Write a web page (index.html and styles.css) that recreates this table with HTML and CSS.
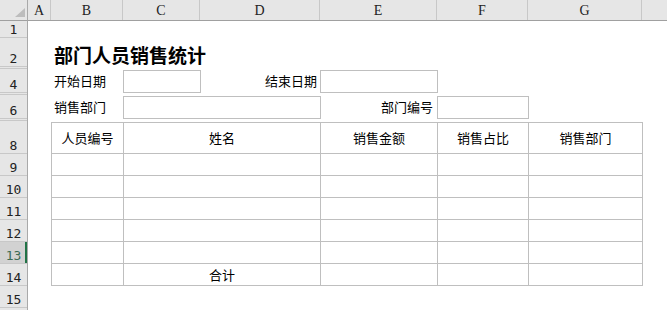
FILE: index.html
```html
<!DOCTYPE html>
<html lang="zh-CN">
<head>
<meta charset="utf-8">
<title>部门人员销售统计</title>
<link rel="stylesheet" href="styles.css">
</head>
<body>
<div class="sheet">
  <div class="corner"><span class="corner-mark"></span></div>

  <div class="colbar">
    <div class="colhd col-a">A</div>
    <div class="colhd col-b">B</div>
    <div class="colhd col-c">C</div>
    <div class="colhd col-d">D</div>
    <div class="colhd col-e">E</div>
    <div class="colhd col-f">F</div>
    <div class="colhd col-g">G</div>
    <div class="colhd col-h"></div>
  </div>

  <div class="rowbar">
    <div class="rowhd row-s">1</div>
    <div class="rowhd row-title">2</div>
    <div class="rowhd row-gap"></div>
    <div class="rowhd row-n after-gap">4</div>
    <div class="rowhd row-gap"></div>
    <div class="rowhd row-n after-gap">6</div>
    <div class="rowhd row-gap"></div>
    <div class="rowhd row-head after-gap">8</div>
    <div class="rowhd row-n">9</div>
    <div class="rowhd row-n">10</div>
    <div class="rowhd row-n">11</div>
    <div class="rowhd row-n">12</div>
    <div class="rowhd row-n is-active">13</div>
    <div class="rowhd row-n">14</div>
    <div class="rowhd row-n">15</div>
    <div class="rowhd row-rest"></div>
  </div>

  <div class="cells">
    <div class="title">部门人员销售统计</div>

    <div class="label label-start">开始日期</div>
    <div class="field field-start"></div>
    <div class="label label-end">结束日期</div>
    <div class="field field-end"></div>

    <div class="label label-dept">销售部门</div>
    <div class="field field-dept"></div>
    <div class="label label-code">部门编号</div>
    <div class="field field-code"></div>

    <div class="report">
      <div class="th">人员编号</div>
      <div class="th">姓名</div>
      <div class="th">销售金额</div>
      <div class="th">销售占比</div>
      <div class="th">销售部门</div>

      <div class="td"></div><div class="td"></div><div class="td"></div><div class="td"></div><div class="td"></div>
      <div class="td"></div><div class="td"></div><div class="td"></div><div class="td"></div><div class="td"></div>
      <div class="td"></div><div class="td"></div><div class="td"></div><div class="td"></div><div class="td"></div>
      <div class="td"></div><div class="td"></div><div class="td"></div><div class="td"></div><div class="td"></div>
      <div class="td"></div><div class="td"></div><div class="td"></div><div class="td"></div><div class="td"></div>
      <div class="td"></div><div class="td td-total">合计</div><div class="td"></div><div class="td"></div><div class="td"></div>
    </div>
  </div>
</div>
</body>
</html>
```

FILE: styles.css
```css
* {
  box-sizing: border-box;
}

html,
body {
  margin: 0;
  padding: 0;
  background: #ffffff;
}

body {
  width: 667px;
  height: 310px;
  overflow: hidden;
  font-family: "Noto Sans CJK SC", "Noto Sans", sans-serif;
  color: #000000;
}

/* whole worksheet: headers on top and left, cells in the rest */
.sheet {
  display: grid;
  grid-template-columns: 28px 1fr;
  grid-template-rows: 21px 1fr;
  width: 667px;
  height: 310px;
  overflow: hidden;
}

.corner {
  position: relative;
  background: #e6e6e6;
  border-right: 1px solid #a9a9a9;
  border-bottom: 1px solid #a0a0a0;
}

.corner-mark {
  position: absolute;
  left: 15px;
  top: 8px;
  width: 10px;
  height: 9px;
  background: #bdbdbd;
  clip-path: polygon(100% 0, 100% 100%, 0 100%);
}

/* column letters */
.colbar {
  display: flex;
  background: #e6e6e6;
  border-bottom: 1px solid #a0a0a0;
}

.colhd {
  display: flex;
  align-items: flex-end;
  justify-content: center;
  flex: none;
  padding-bottom: 2px;
  border-right: 1px solid #c8c8c8;
  font-family: "Liberation Serif", "DejaVu Serif", serif;
  font-size: 14px;
  line-height: 14px;
  color: #222222;
}

.col-a { width: 23px; }
.col-b { width: 72px; }
.col-c { width: 77px; }
.col-d { width: 120px; }
.col-e { width: 117px; }
.col-f { width: 91px; }
.col-g { width: 114px; }
.col-h { flex: 1; border-right: none; }

/* row numbers */
.rowbar {
  display: flex;
  flex-direction: column;
  min-height: 0;
  overflow: hidden;
  background: #e6e6e6;
  border-right: 1px solid #a9a9a9;
}

.rowhd {
  display: flex;
  align-items: flex-end;
  justify-content: center;
  flex: none;
  border-top: 1px solid #c8c8c8;
  font-family: "DejaVu Sans Mono", "Liberation Mono", monospace;
  font-size: 13px;
  line-height: 13px;
  padding-bottom: 1px;
  color: #222222;
}

.rowhd:first-child {
  border-top: none;
}

.row-s { height: 16px; }
.row-title { height: 29px; }
.row-n { height: 22px; }
.row-head { height: 31px; }
.row-rest { flex: 1 1 auto; min-height: 0; }

.row-gap {
  height: 4px;
  background: linear-gradient(to bottom, #e6e6e6 1px, #c8c8c8 1px, #c8c8c8 2px, #e6e6e6 2px);
}

.after-gap {
  border-top: none;
}

.rowhd.is-active {
  background: #d2d2d2;
  color: #3d6b54;
  box-shadow: inset -2px 0 0 #217346;
}

/* cell area, one track per sheet column / row */
.cells {
  display: grid;
  grid-template-columns: 23px 72px 77px 120px 117px 91px 114px 1fr;
  grid-template-rows: 16px 29px 4px 22px 4px 22px 4px 31px repeat(7, 22px);
  min-height: 0;
}

.title {
  grid-column: 2 / 6;
  grid-row: 2;
  align-self: end;
  padding-left: 3px;
  font-size: 19px;
  font-weight: bold;
  line-height: 22px;
  white-space: nowrap;
}

.label {
  display: flex;
  align-items: center;
  font-size: 13px;
  line-height: 16px;
  white-space: nowrap;
}

.label-start { grid-column: 2; grid-row: 4; padding-left: 3px; }
.label-end { grid-column: 4; grid-row: 4; justify-content: flex-end; padding-right: 3px; }
.label-dept { grid-column: 2; grid-row: 6; padding-left: 3px; }
.label-code { grid-column: 5; grid-row: 6; justify-content: flex-end; padding-right: 4px; }

.field {
  margin: 0 -1px -1px 0;
  border: 1px solid #bfbfbf;
}

.field-start { grid-column: 3; grid-row: 4; }
.field-end { grid-column: 5; grid-row: 4; }
.field-dept { grid-column: 3 / 5; grid-row: 6; }
.field-code { grid-column: 6; grid-row: 6; }

/* bordered report block B8:G14 */
.report {
  grid-column: 2 / 8;
  grid-row: 8 / 15;
  display: grid;
  grid-template-columns: 72px 197px 117px 91px 114px;
  grid-template-rows: 31px repeat(6, 22px);
  margin: 0 -1px -1px 0;
  border-right: 1px solid #bfbfbf;
  border-bottom: 1px solid #bfbfbf;
}

.th,
.td {
  display: flex;
  align-items: center;
  justify-content: center;
  border-left: 1px solid #bfbfbf;
  border-top: 1px solid #bfbfbf;
  font-size: 13px;
  line-height: 16px;
  white-space: nowrap;
}

.td-total {
  padding-top: 1px;
}
```
